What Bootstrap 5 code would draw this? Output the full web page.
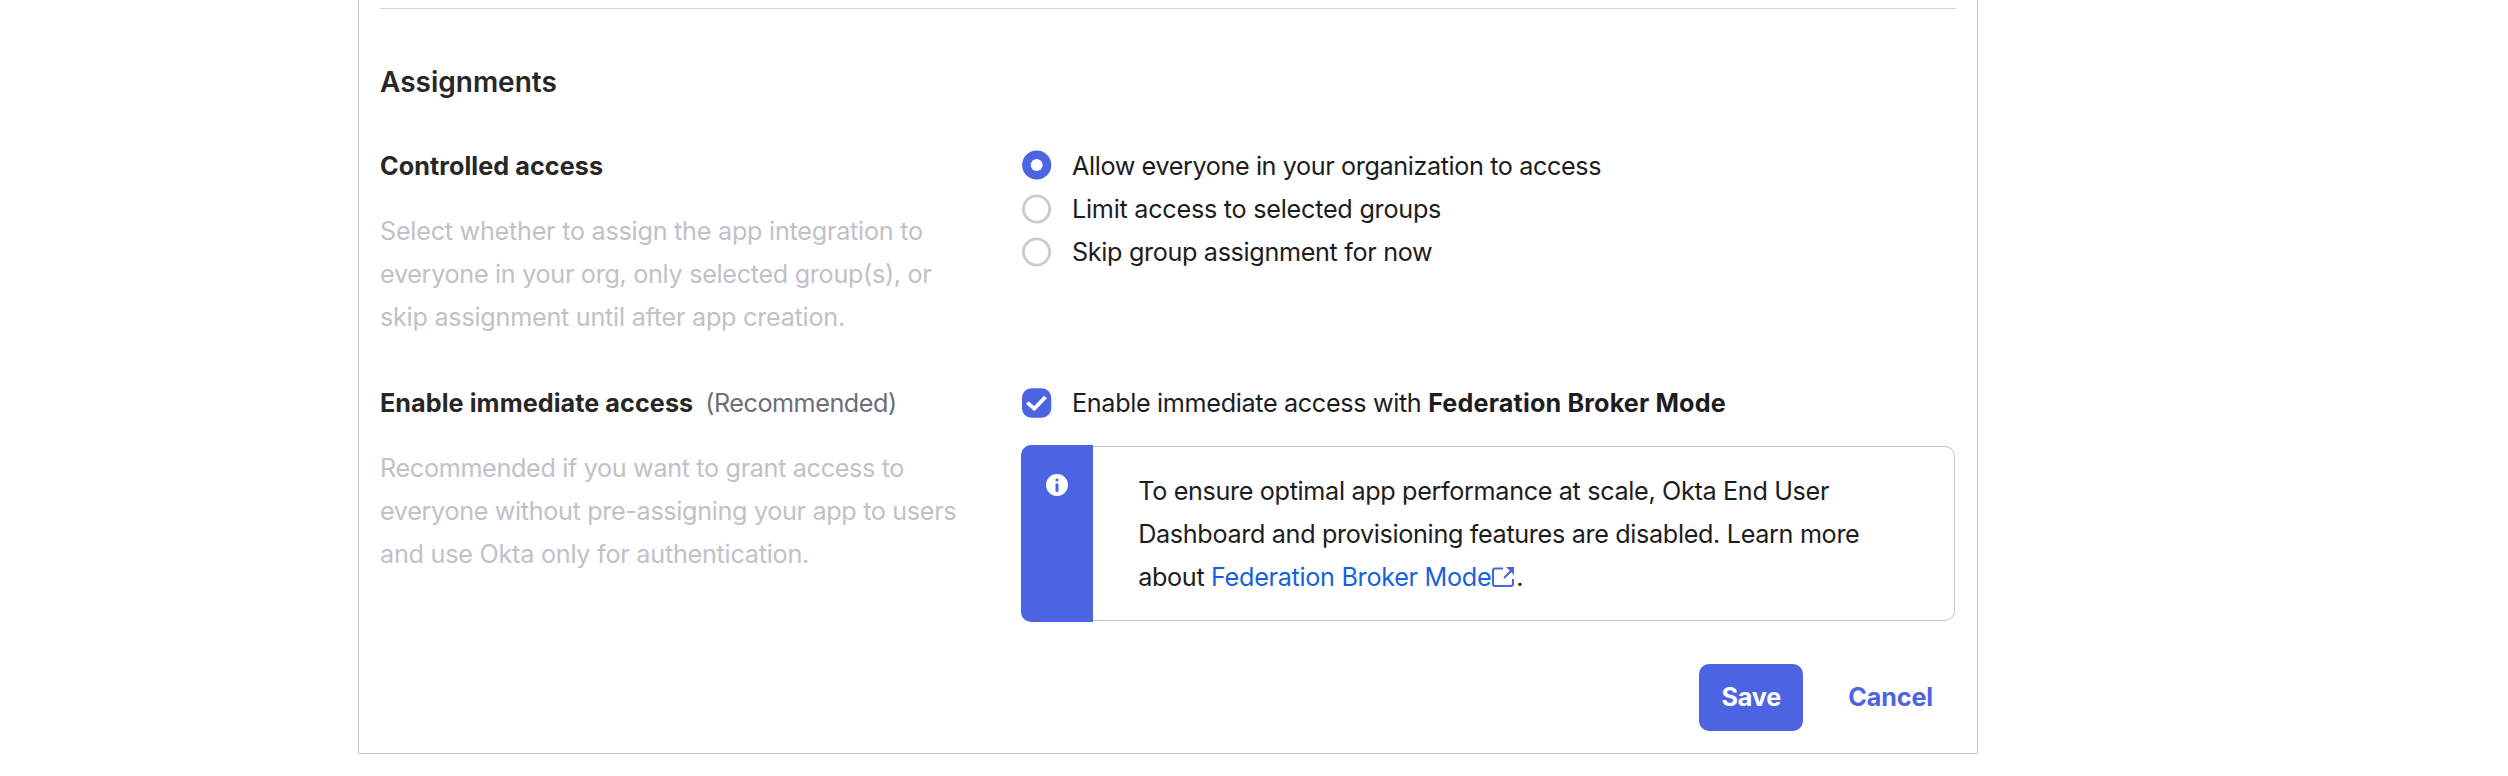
<!DOCTYPE html>
<html lang="en">
<head>
<meta charset="utf-8">
<title>Assignments</title>
<link rel="stylesheet" href="https://cdn.jsdelivr.net/npm/bootstrap@5.3.0/dist/css/bootstrap.min.css">
<style>
body{font-family:Inter,sans-serif;font-size:25.2px;line-height:43.2px;letter-spacing:-.34px;color:#1d1d21;background:#fff;overflow:hidden}
.panel{width:1620px;height:754px;margin-left:358px;border:1px solid #c6c7c9;border-top:0;padding:8px 21px 0}
.rule{height:1px;background:#d2d3d5}
.section-title{font-size:28px;line-height:40px;font-weight:600;letter-spacing:0;margin:53px 0 43px;color:#272727}
.field-row{height:237px}
.field-side{width:641px}
.field-name{font-weight:700;letter-spacing:.06px}
.field-side .field-name{color:#272727}
.mode-name{letter-spacing:.15px}
.hint{color:#c1c1c8;margin-top:21.8px}
.optional{color:#6e6e78;margin-left:12px;letter-spacing:-.48px}
.snug{letter-spacing:-.39px}
.roomy{letter-spacing:-.25px}
.even{letter-spacing:-.31px}
.choice{gap:20.5px;height:43.2px}
.tick{flex:none;width:30px;height:30px;display:block;margin:-2.2px 0 0 .5px}
.tick-on{margin-top:-2.8px}
.tick-box{margin-top:-.8px}
.callout{height:177px;width:934px;margin-top:19.8px}
.callout-bar{width:72px;background:#4c64e1;border-radius:10px 0 0 10px;padding:29px 0 0 25px}
.callout-body{margin:1px 0;border:1px solid #c6c7c9;border-left:0;border-radius:0 10px 10px 0;padding:22.8px 0 0 45.2px}
.doc-link{color:#1662dd;text-decoration:none;letter-spacing:-.3px}
.doc-link svg{margin:0 2px -1px 1px;vertical-align:baseline}
.actions{gap:23px;margin-top:42px;padding-right:1px}
.action{border:0;border-radius:10px;font-size:25.2px;font-weight:700;line-height:43.2px;letter-spacing:-.15px;height:67px;padding:12px 22px}
.action-save,.action-save:hover{background:#4c64e1;color:#fff;width:104px}
.action-cancel{color:#4c64e1}
</style>
</head>
<body>
<main class="panel">
  <div class="rule"></div>
  <h2 class="section-title">Assignments</h2>
  <section class="field-row d-flex">
    <div class="field-side flex-shrink-0">
      <div class="field-name">Controlled access</div>
      <p class="hint roomy mb-0">Select whether to assign the app integration to<br><span class="even">everyone in your org, only selected group(s), or</span><br>skip assignment until after app creation.</p>
    </div>
    <div>
      <label class="choice d-flex align-items-center"><svg class="tick tick-on" viewBox="0 0 30 30"><circle cx="14.7" cy="15" r="14.6" fill="#4c64e1"/><circle cx="14.7" cy="15" r="6" fill="#fff"/></svg><span class="snug">Allow everyone in your organization to access</span></label>
      <label class="choice d-flex align-items-center"><svg class="tick" viewBox="0 0 30 30"><circle cx="14.6" cy="15" r="13.1" fill="none" stroke="#cbcbcb" stroke-width="2.9"/></svg><span class="roomy">Limit access to selected groups</span></label>
      <label class="choice d-flex align-items-center"><svg class="tick" viewBox="0 0 30 30"><circle cx="14.6" cy="15" r="13.1" fill="none" stroke="#cbcbcb" stroke-width="2.9"/></svg><span>Skip group assignment for now</span></label>
    </div>
  </section>
  <section class="d-flex">
    <div class="field-side flex-shrink-0">
      <div><span class="field-name">Enable immediate access</span><span class="optional">(Recommended)</span></div>
      <p class="hint mb-0">Recommended if you want to grant access to<br>everyone without pre-assigning your app to users<br><span class="roomy">and use Okta only for authentication.</span></p>
    </div>
    <div>
      <label class="choice d-flex align-items-center"><svg class="tick tick-box" viewBox="0 0 30 30"><rect x="0" y=".3" width="29.2" height="29.4" rx="9.5" fill="#4c64e1"/><path d="M5.3 14.6 12.3 20.6 23.5 9" fill="none" stroke="#fff" stroke-width="3.8"/></svg><span>Enable immediate access with <span class="field-name mode-name">Federation Broker Mode</span></span></label>
      <div class="callout d-flex">
        <div class="callout-bar flex-shrink-0"><svg class="d-block" width="22" height="22" viewBox="0 0 22 22"><circle cx="11" cy="11" r="11" fill="#fff"/><circle cx="11" cy="6" r="1.6" fill="#4c64e1"/><path d="M9.5 9.5h3v8.3h-3z" fill="#4c64e1"/></svg></div>
        <div class="callout-body flex-grow-1">To ensure optimal app performance at scale, Okta End User<br>Dashboard and provisioning features are disabled. Learn more<br>about <a class="doc-link" href="#">Federation Broker Mode<svg width="22" height="20" viewBox="0 0 22 20" fill="none" stroke="#4c64e1" stroke-width="2"><path d="M11 1.5H3Q1 1.5 1 3.5V17q0 2 2 2h16q2 0 2-2v-5"/><path d="m12 11 7-7"/><path d="M14 0h8v8z" fill="#4c64e1" stroke="none"/></svg></a>.</div>
      </div>
    </div>
  </section>
  <div class="actions d-flex justify-content-end"><button class="btn action action-save">Save</button><button class="btn action action-cancel">Cancel</button></div>
</main>
<script src="https://cdn.jsdelivr.net/npm/bootstrap@5.3.0/dist/js/bootstrap.bundle.min.js"></script>
</body>
</html>
